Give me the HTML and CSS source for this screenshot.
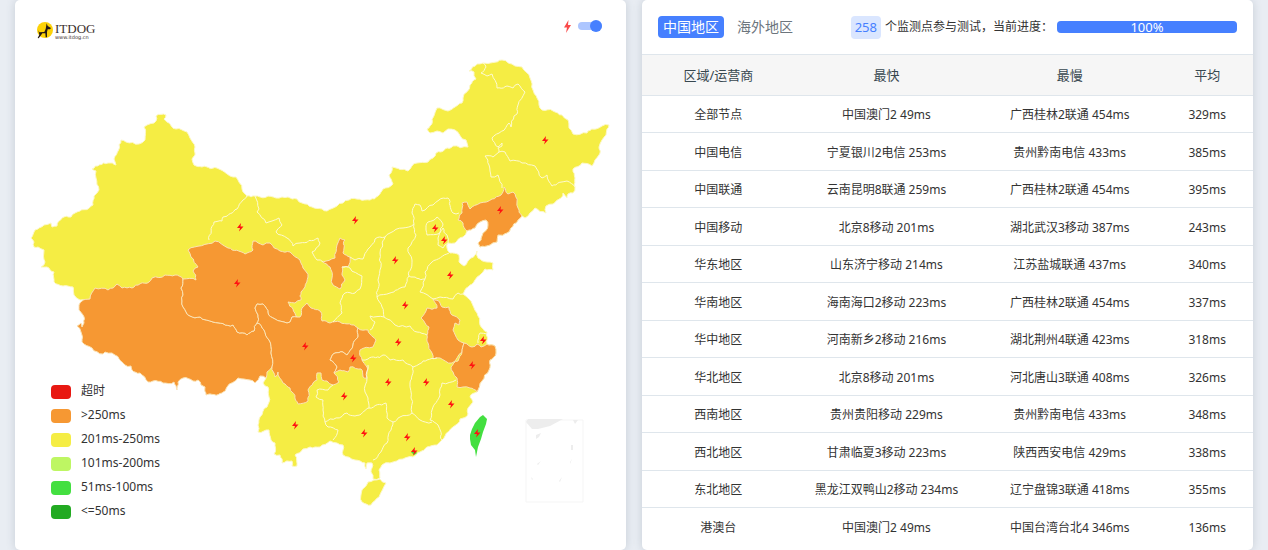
FILE: index.html
```html
<!DOCTYPE html>
<html lang="zh-CN">
<head>
<meta charset="utf-8">
<meta name="viewport" content="width=device-width, initial-scale=1">
<title>ITDOG</title>
<link rel="stylesheet" href="styles.css">
</head>
<body>
<main class="board">
  <section class="card map-card">
    <svg class="map" id="map" viewBox="15 0 611 550" aria-label="中国地图"></svg>
    <header class="map-head">
      <a class="logo" href="#">
        <svg class="logo-mark" viewBox="0 0 48 48" aria-hidden="true">
          <circle cx="24" cy="24" r="24" fill="#fdd207"/>
          <path d="M29 4l3 8 10 6-3 4-7 0-2 8 0 16h-4l-1-12-9 0-4 6-7 9-3-1 5-10-3-13 3 6 15-1 4-9z" fill="#231815"/>
        </svg>
        <span class="logo-text"><span class="logo-name">ITDOG</span><span class="logo-url">www.itdog.cn</span></span>
      </a>
      <label class="switch">
        <svg class="switch-icon" viewBox="0 0 7 13" role="img" aria-label="闪电"><path d="M4.5 0L0 7.500h3L2 13 7 5H4z"/></svg>
        <input class="switch-input" type="checkbox" checked>
      </label>
    </header>
    <ul class="legend">
      <li class="legend-item"><span class="swatch timeout"></span>超时</li>
      <li class="legend-item"><span class="swatch over250"></span>&gt;250ms</li>
      <li class="legend-item"><span class="swatch to250"></span>201ms-250ms</li>
      <li class="legend-item"><span class="swatch to200"></span>101ms-200ms</li>
      <li class="legend-item"><span class="swatch to100"></span>51ms-100ms</li>
      <li class="legend-item"><span class="swatch to50"></span>&lt;=50ms</li>
    </ul>
  </section>

  <section class="card">
    <header class="table-head">
      <nav class="tabs">
        <button class="tab active" type="button">中国地区</button>
        <button class="tab" type="button">海外地区</button>
      </nav>
      <div class="status">
        <span class="count">258</span>
        <span class="status-text">个监测点参与测试，当前进度：</span>
        <div class="progress" role="progressbar" aria-valuenow="100" aria-label="当前进度"><div class="progress-bar">100%</div></div>
      </div>
    </header>
    <table class="results">
      <thead><tr><th>区域/运营商</th><th>最快</th><th>最慢</th><th>平均</th></tr></thead>
      <tbody>
        <tr><td>全部节点</td><td>中国澳门2 49ms</td><td>广西桂林2联通 454ms</td><td>329ms</td></tr>
        <tr><td>中国电信</td><td>宁夏银川2电信 253ms</td><td>贵州黔南电信 433ms</td><td>385ms</td></tr>
        <tr><td>中国联通</td><td>云南昆明8联通 259ms</td><td>广西桂林2联通 454ms</td><td>395ms</td></tr>
        <tr><td>中国移动</td><td>北京8移动 201ms</td><td>湖北武汉3移动 387ms</td><td>243ms</td></tr>
        <tr><td>华东地区</td><td>山东济宁移动 214ms</td><td>江苏盐城联通 437ms</td><td>340ms</td></tr>
        <tr><td>华南地区</td><td>海南海口2移动 223ms</td><td>广西桂林2联通 454ms</td><td>337ms</td></tr>
        <tr><td>华中地区</td><td>河南新乡2移动 216ms</td><td>湖北荆州4联通 423ms</td><td>318ms</td></tr>
        <tr><td>华北地区</td><td>北京8移动 201ms</td><td>河北唐山3联通 408ms</td><td>326ms</td></tr>
        <tr><td>西南地区</td><td>贵州贵阳移动 229ms</td><td>贵州黔南电信 433ms</td><td>348ms</td></tr>
        <tr><td>西北地区</td><td>甘肃临夏3移动 223ms</td><td>陕西西安电信 429ms</td><td>338ms</td></tr>
        <tr><td>东北地区</td><td>黑龙江双鸭山2移动 234ms</td><td>辽宁盘锦3联通 418ms</td><td>355ms</td></tr>
        <tr><td>港澳台</td><td>中国澳门2 49ms</td><td>中国台湾台北4 346ms</td><td>136ms</td></tr>
      </tbody>
    </table>
  </section>
</main>
<script src="map.js"></script>
</body>
</html>
```

FILE: styles.css
```css
* { box-sizing: border-box; }

body {
  margin: 0;
  background: #e9edf3;
  color: #333;
  font: 12px/18px "Noto Sans", "Noto Sans CJK SC", sans-serif;
}

.board {
  display: grid;
  grid-template-columns: 1fr 1fr;
  gap: 16px;
  min-height: 100vh;
  padding: 0 15px;
}

.card {
  background: #fff;
  border-radius: 5px;
  box-shadow: 0 0 10px rgba(60, 80, 100, .2);
}

/* Map card: heading and legend are stacked over the map in one grid cell */
.map-card { display: grid; }
.map-card > * { grid-area: 1 / 1; }
.map { width: 100%; display: block; }

.land { fill: #f5ed44; }
.slow { fill: #f69833; }
.fast { fill: #43df40; }
.land, .slow, .fast { stroke: #fdf8c8; stroke-width: 1; stroke-linejoin: round; }
.slow { stroke: #fbe3b5; }
.fast { stroke: none; }
.border { fill: none; stroke: #fefad0; stroke-width: 1; stroke-linejoin: round; }
.bolt { fill: #f11; }
.frame { fill: none; stroke: #f5f5f5; }
.islet { fill: #ededed; }

.map-head {
  align-self: start;
  display: flex;
  justify-content: space-between;
  align-items: flex-start;
  padding: 20px 24px 0 22px;
}

.logo { display: flex; gap: 2px; align-items: center; color: #3b302d; text-decoration: none; }
.logo-mark { width: 16px; height: 20px; }
.logo-text { display: flex; flex-direction: column; padding-top: 2px; font-family: "Liberation Serif", serif; }
.logo-name { font-size: 13px; line-height: 12px; }
.logo-url { font: 5px/5px "DejaVu Sans", sans-serif; }

.switch { display: flex; align-items: center; gap: 7px; height: 12px; }
.switch-icon { width: 7px; height: 13px; fill: #fa4a4a; }
.switch-input {
  appearance: none;
  display: flex;
  align-items: center;
  justify-content: flex-end;
  width: 24px;
  height: 8px;
  margin: 0;
  border-radius: 4px;
  background: #adc6ff;
}
.switch-input::before { content: ""; width: 12px; height: 12px; border-radius: 50%; background: #4680ff; }

.legend { align-self: end; justify-self: start; margin: 0; padding: 0 0 27px 36px; list-style: none; }
.legend-item { display: flex; align-items: center; gap: 10px; height: 24px; }
.swatch { width: 20px; height: 14px; margin-top: 2px; border-radius: 4px; }
.timeout { background: #e81812; }
.over250 { background: #f69833; }
.to250 { background: #f5ed44; }
.to200 { background: #bef663; }
.to100 { background: #43df40; }
.to50 { background: #22aa22; }

/* Results card */
.table-head { display: flex; justify-content: space-between; align-items: center; height: 54px; padding: 0 16px; }
.tabs { display: flex; gap: 8px; }
.tab { padding: 0 5px; border: 0; border-radius: 4px; background: none; color: #6c757d; font: 14px/22px "Noto Sans", "Noto Sans CJK SC", sans-serif; }
.tab.active { background: #4680ff; color: #fff; }

.status { display: flex; align-items: center; gap: 4px; }
.count { padding: 0 4px; border-radius: 4px; background: #dae6ff; color: #4680ff; font-size: 13px; line-height: 23px; }
.status-text { white-space: nowrap; }
.progress { width: 180px; border-radius: 4px; background: #e9ecef; }
.progress-bar { border-radius: 4px; background: #4680ff; color: #fff; font-size: 13px; line-height: 12px; text-align: center; }

.results { width: 100%; table-layout: fixed; border-collapse: collapse; text-align: center; }
.results th { width: 30%; height: 41px; padding: 0; border: solid #dfe6ec; border-width: 1px 0; background: #f6f6f6; color: #37474f; font-size: 13px; font-weight: 400; }
.results th:first-child { width: 25%; }
.results th:last-child { width: 15%; }
.results td { height: 37px; padding: 2px 0 0; border-top: 1px solid #dfe6ec; }
.results tr:nth-child(even) td { height: 38px; }
```

FILE: map.js
```js
const svg = document.getElementById('map');
const NS = 'http://www.w3.org/2000/svg';

// Splits every edge into small kinks. The offset depends only on the two
// end points, so an edge shared by two provinces keeps the same outline.
function kink(a, b, depth) {
  const dx = b[0] - a[0], dy = b[1] - a[1], len = Math.hypot(dx, dy);
  if (len < 4 || depth === 0) return [a];
  const flip = a[0] > b[0] || (a[0] === b[0] && a[1] > b[1]);
  const p = flip ? b : a, q = flip ? a : b;
  const raw = Math.sin(p[0] * 12.9 + p[1] * 78.2 + q[0] * 37.7 + q[1] * 9.1) * 43758.5;
  const n = (raw - Math.floor(raw) - 0.5) * Math.min(len * 0.34, 2.6);
  const ux = (q[1] - p[1]) / len, uy = (p[0] - q[0]) / len;
  const m = [(a[0] + b[0]) / 2 + ux * n, (a[1] + b[1]) / 2 + uy * n];
  return kink(a, m, depth - 1).concat(kink(m, b, depth - 1));
}

function draw(cls, text, closed, rough = true) {
  const pts = text.trim().split(/\s+/).map(p => p.split(',').map(Number));
  let out = [];
  const last = closed ? pts.length : pts.length - 1;
  for (let i = 0; i < last; i++) {
    const a = pts[i], b = pts[(i + 1) % pts.length];
    out = out.concat(rough ? kink(a, b, 3) : [a]);
  }
  if (!closed) out.push(pts[pts.length - 1]);
  const el = document.createElementNS(NS, closed ? 'polygon' : 'polyline');
  el.setAttribute('class', cls);
  el.setAttribute('points', out.map(p => p.map(v => v.toFixed(1)).join(',')).join(' '));
  svg.appendChild(el);
}

// Mainland outline
draw('land', `31,238 35,230 44,225 51,223 52,227 57,226 62,218 71,217 75,213 93,205 94,196 99,190 96,178
96,171 92,169 108,163 116,165 114,159 121,140 126,142 139,144 145,140 144,127 147,125 154,123 156,121 156,116
166,115 164,119 167,122 176,129 187,132 190,138 195,147 195,155 192,159 194,165 202,167 219,169 230,176 236,177
242,189 247,196 255,196 276,198 288,197 297,199 302,203 312,207 322,209 327,211 337,206 349,200 370,200 378,196
383,189 393,184 389,175 392,167 408,171 417,163 428,162 433,158 436,153 445,149 453,146 468,147 466,140 455,130
448,129 443,133 437,131 430,133 427,129 430,126 437,108 448,111 455,107 462,103 463,98 470,85 476,79 474,72 469,71
477,64 483,63 502,60 515,66 522,67 526,72 530,78 533,90 537,98 539,105 542,110 553,111 562,115 568,120 569,128
573,134 587,133 588,131 596,129 602,126 609,125 607,129 606,135 602,140 599,147 599,155 595,160 592,166 582,163
573,169 575,178 575,187 573,193 568,194 567,198 563,193 561,198 553,204 546,206 546,213 535,208 530,213 525,218
522,216 507,233 498,235 497,242 480,247 478,243 482,236 488,225 486,220 480,222 475,228 467,231 463,237 455,243
448,243 447,248 450,253 459,255 459,262 464,266 471,258 477,251 478,258 487,262 493,263 493,270 485,269 480,275
475,280 468,287 463,294 471,301 477,313 480,325 487,332 487,344 495,346 496,353 490,360 489,370 482,381 477,392
470,397 473,402 468,408 468,414 460,419 453,427 445,436 442,440 437,445 427,447 420,452 413,457 403,459 390,463
382,465 379,470 380,478 373,479 371,472 372,463 367,463 366,469 365,463 355,460 343,455 343,445 337,443 330,441
320,447 310,447 303,449 295,455 297,466 292,466 292,461 282,463 280,455 274,454 275,443 271,440 269,430 258,432
258,425 260,417 267,407 269,397 268,387 263,383 266,378 260,340 160,300 80,300 74,295 73,287 63,286 54,282 54,272
47,267 41,267 45,262 44,250 38,247 34,247 34,242`, true);
// Hainan
draw('land', '362,490 368,482 380,479 386,483 379,497 371,505 362,502', true);

// Tibet
draw('slow', `82,301 90,299 95,288 108,290 117,284 122,288 132,288 149,282 152,278 165,275 175,275 183,279 181,288
183,295 183,307 190,316 200,317 213,322 233,325 237,332 247,335 254,331 257,323 264,330 269,340 271,353 272,367
267,372 266,378 260,376 255,383 250,380 238,378 227,387 222,393 206,395 205,387 201,385 198,380 193,381 183,378
178,382 177,390 174,382 163,383 153,381 148,382 140,373 132,370 131,366 125,365 112,353 105,352 103,354 92,348
82,342 81,332 77,326 81,323 82,327 84,323 83,315 79,310 79,305`, true);
// Qinghai
draw('slow', `188,250 215,241 228,248 245,254 253,250 253,241 263,245 270,243 280,251 290,252 300,260 303,268
308,277 305,287 301,292 301,300 295,303 288,302 293,309 297,317 292,317 290,322 287,323 275,319 268,313 263,304
257,304 255,308 258,315 257,323 254,331 247,335 237,332 233,325 213,322 200,317 190,316 183,307 183,295 181,288
183,279 196,280 193,271 198,267 191,257`, true);
// Sichuan
draw('slow', `257,323 258,315 255,308 257,304 263,304 268,313 275,319 287,323 290,322 292,317 297,317 300,317
302,308 307,303 311,308 320,311 322,321 330,323 340,322 358,328 358,337 353,345 347,355 343,352 335,353 330,360
337,367 334,373 339,382 333,385 327,381 322,380 321,373 317,373 317,380 313,383 308,390 308,401 298,404 290,388
283,383 278,372 275,377 272,367 271,353 269,340 264,330`, true);
// Chongqing
draw('slow', `358,328 368,330 370,334 376,340 373,347 360,350 362,360 367,367 367,378 363,377 361,369 350,367
348,372 340,370 334,373 337,367 330,360 335,353 343,352 347,355 353,345 358,337`, true);
// Ningxia
draw('slow', `340,238 345,240 344,248 343,253 350,257 348,267 342,267 342,275 345,280 340,289 333,285 332,278
330,267 323,262 335,258 337,245`, true);
// Liaoning
draw('slow', `522,216 507,233 498,235 497,242 480,247 478,243 482,236 488,225 486,220 480,222 475,228 467,231
463,223 458,220 462,213 462,203 467,202 470,209 480,203 492,199 501,195 504,187 508,194 513,192 517,202 518,208`, true);
// Anhui
draw('slow', `433,299 440,303 442,307 449,307 452,315 460,320 459,325 455,323 453,330 458,340 464,343 462,352
452,363 440,358 433,359 432,353 428,343 427,335 429,327 425,323 421,318 427,308 437,308`, true);
// Zhejiang
draw('slow', `464,343 472,347 477,344 481,347 487,344 495,346 496,353 490,360 489,370 482,381 477,392 470,388
463,387 457,387 457,378 453,372 451,367 458,361 462,352`, true);

// Borders between provinces of the same colour
[
  '247,196 243,200 237,209 223,217 222,221 214,222 209,240',
  '255,196 259,209 257,212 266,223 272,221 279,218 282,225 276,232 287,238 293,246 300,243 318,238 320,243 312,252 317,260 323,262',
  '350,257 355,260 363,259 368,249 375,239 385,237 390,233 403,228 414,224',
  '414,224 412,213 415,204 420,205 422,211 433,205 439,200 448,198 453,213 459,213',
  '385,237 380,253 381,267 378,280 377,297',
  '414,224 416,235 408,248 412,260 409,276 405,287 390,293 377,297',
  '409,276 425,279 420,292 433,299',
  '425,279 425,272 432,262 449,253',
  '433,299 440,297 453,299 458,293 463,294',
  '377,297 382,307 384,317 395,325 410,326 417,332 427,335',
  '384,317 370,316 375,322 370,330',
  '342,267 350,268 362,276 360,289 355,293 345,293 340,303 342,313 333,322',
  '362,360 368,359 383,355 390,360 403,360 413,367 427,360 437,358',
  '368,365 367,378 365,392 368,398 369,408',
  '413,367 410,383 411,398 412,413',
  '369,408 386,403 387,418 393,422 400,417 412,413 420,420 432,422',
  '456,380 442,383 440,395 432,410 430,420 438,425 442,440',
  '393,422 387,443 373,460',
  '333,385 328,390 317,390 316,397 323,400 323,410 325,422 328,427 338,430 333,440',
  '325,422 347,413 355,416 369,408',
  '483,63 486,67 481,73 487,76 492,74 497,88 513,88 518,84 525,92 518,105 517,114 514,116 511,127 509,123 492,138 498,147 502,143 502,146 498,148 499,152',
  '499,152 505,152 510,161 522,163 535,166 542,178 547,175 552,186 567,181 575,187',
  '499,152 493,157 485,156 489,165 491,177 498,175 502,188',
  '428,222 437,217 443,224 440,233 427,235 426,230 428,222',
  '443,228 447,235 448,243 443,248 438,245 438,238 443,228',
  '487,334 480,333 478,343'
].forEach(b => draw('border', b, false));

// Hong Kong and Taiwan
draw('fast', '411,452 414,450 417,453 414,455', true, false);
draw('fast', '480,417 483,415 487,419 486,424 483,432 481,439 478,447 476,457 475,450 471,445 470,439 470,435 472,429 475,423', true, false);

// South China Sea inset
draw('frame', '526,420 583,420 583,502 526,502', true, false);
draw('islet', '526,422 528,419 563,419 550,426 538,429 532,429', true, false);
draw('islet', '573,420 578,420 575,424', true, false);
draw('islet', '536,435 541,433 539,437 536,439', true, false);
draw('islet', '571,445 573,445 573,450 571,450', true, false);
draw('islet', '570,462 572,459 570,464', true, false);
draw('islet', '537,464 541,461 538,465', true, false);
draw('islet', '559,481 562,477 560,482', true, false);
draw('islet', '531,477 533,479 532,480', true, false);

// Monitoring points
[
  [240, 227], [355, 220], [237, 283], [545, 140], [500, 210], [435, 228], [444, 240], [395, 260],
  [450, 275], [405, 305], [305, 346], [353, 358], [398, 342], [483, 340], [472, 365], [388, 382],
  [426, 382], [344, 396], [451, 404], [364, 433], [407, 437], [414, 451], [295, 425], [477, 433]
].forEach(([x, y]) => {
  const el = document.createElementNS(NS, 'path');
  el.setAttribute('class', 'bolt');
  el.setAttribute('d', `M${x + 1} ${y - 4}l-4 5h3l-1 3.500 4.500-5h-3z`);
  svg.appendChild(el);
});
```
